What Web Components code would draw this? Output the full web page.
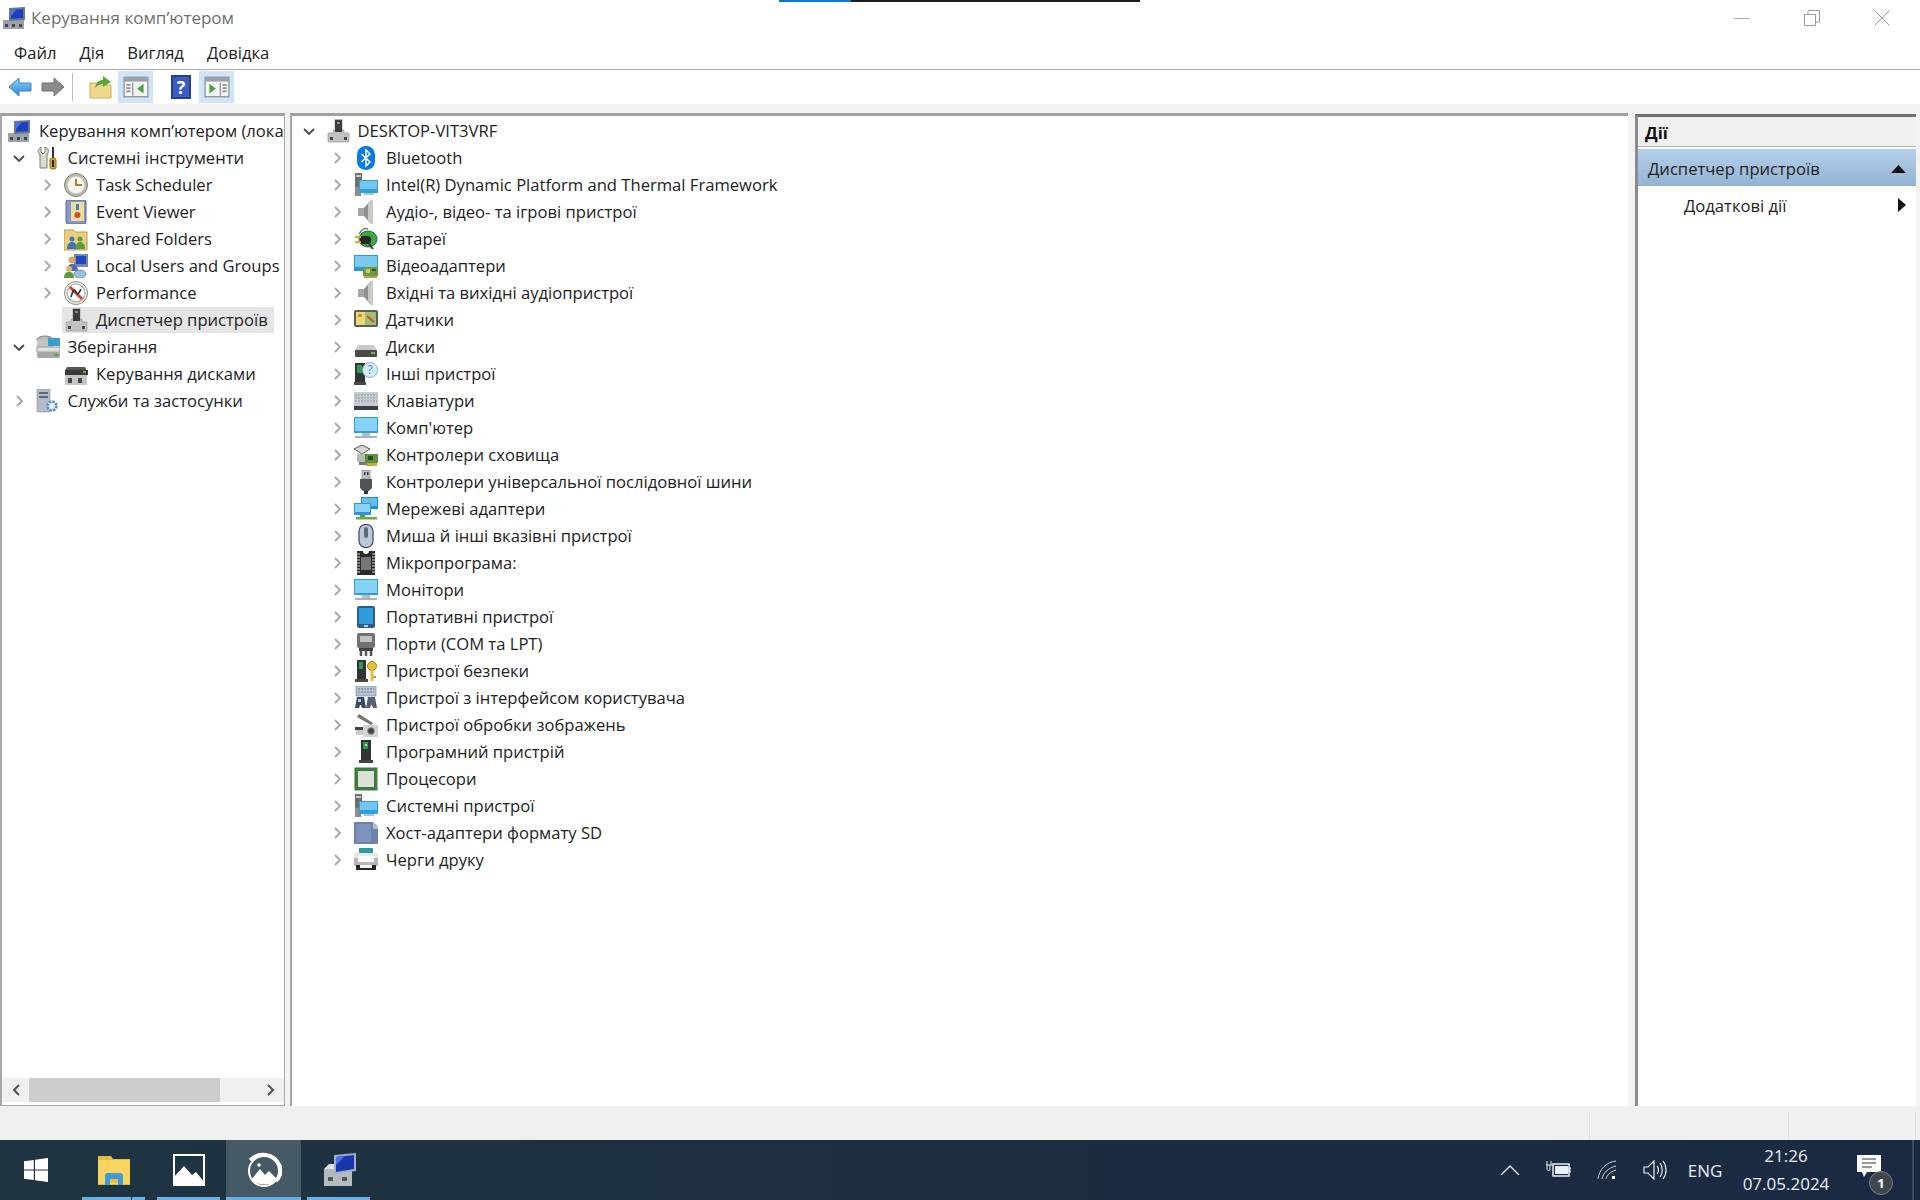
<!DOCTYPE html>
<html lang="uk">
<head>
<meta charset="utf-8">
<title>Керування комп’ютером</title>
<style>
  html, body { margin: 0; height: 100%; background: #fff; overflow: hidden; }
  body { font: 16.6px "Open Sans", "Noto Sans", sans-serif; color: #1a1a1a; }
</style>
</head>
<body>
<mmc-app>
  <mmc-titlebar slot="top">Керування комп’ютером</mmc-titlebar>
  <mmc-menubar slot="top"></mmc-menubar>
  <mmc-toolbar slot="top"></mmc-toolbar>

  <mmc-pane slot="left" style="width:285px">
    <tree-row level="0" icon="computer">Керування комп’ютером (локальний)</tree-row>
    <tree-row level="1" icon="tools" toggle="open">Системні інструменти</tree-row>
    <tree-row level="2" icon="clock" toggle="closed">Task Scheduler</tree-row>
    <tree-row level="2" icon="event" toggle="closed">Event Viewer</tree-row>
    <tree-row level="2" icon="shared" toggle="closed">Shared Folders</tree-row>
    <tree-row level="2" icon="users" toggle="closed">Local Users and Groups</tree-row>
    <tree-row level="2" icon="perf" toggle="closed">Performance</tree-row>
    <tree-row level="2" icon="devmgr" selected>Диспетчер пристроїв</tree-row>
    <tree-row level="1" icon="storage" toggle="open">Зберігання</tree-row>
    <tree-row level="2" icon="diskmgmt">Керування дисками</tree-row>
    <tree-row level="1" icon="services" toggle="closed">Служби та застосунки</tree-row>
    <h-scrollbar slot="bottom"></h-scrollbar>
  </mmc-pane>

  <mmc-pane slot="center" style="flex:1;border-right:none;border-bottom:none">
    <tree-row level="1" icon="devmgr" toggle="open">DESKTOP-VIT3VRF</tree-row>
    <tree-row level="2" icon="bluetooth" toggle="closed">Bluetooth</tree-row>
    <tree-row level="2" icon="sysdev" toggle="closed">Intel(R) Dynamic Platform and Thermal Framework</tree-row>
    <tree-row level="2" icon="speaker" toggle="closed">Аудіо-, відео- та ігрові пристрої</tree-row>
    <tree-row level="2" icon="battery" toggle="closed">Батареї</tree-row>
    <tree-row level="2" icon="display" toggle="closed">Відеоадаптери</tree-row>
    <tree-row level="2" icon="speaker" toggle="closed">Вхідні та вихідні аудіопристрої</tree-row>
    <tree-row level="2" icon="sensors" toggle="closed">Датчики</tree-row>
    <tree-row level="2" icon="disk" toggle="closed">Диски</tree-row>
    <tree-row level="2" icon="other" toggle="closed">Інші пристрої</tree-row>
    <tree-row level="2" icon="keyboard" toggle="closed">Клавіатури</tree-row>
    <tree-row level="2" icon="monitor" toggle="closed">Комп'ютер</tree-row>
    <tree-row level="2" icon="storagectl" toggle="closed">Контролери сховища</tree-row>
    <tree-row level="2" icon="usb" toggle="closed">Контролери універсальної послідовної шини</tree-row>
    <tree-row level="2" icon="network" toggle="closed">Мережеві адаптери</tree-row>
    <tree-row level="2" icon="mouse" toggle="closed">Миша й інші вказівні пристрої</tree-row>
    <tree-row level="2" icon="firmware" toggle="closed">Мікропрограма:</tree-row>
    <tree-row level="2" icon="monitor" toggle="closed">Монітори</tree-row>
    <tree-row level="2" icon="portable" toggle="closed">Портативні пристрої</tree-row>
    <tree-row level="2" icon="ports" toggle="closed">Порти (COM та LPT)</tree-row>
    <tree-row level="2" icon="security" toggle="closed">Пристрої безпеки</tree-row>
    <tree-row level="2" icon="hid" toggle="closed">Пристрої з інтерфейсом користувача</tree-row>
    <tree-row level="2" icon="imaging" toggle="closed">Пристрої обробки зображень</tree-row>
    <tree-row level="2" icon="software" toggle="closed">Програмний пристрій</tree-row>
    <tree-row level="2" icon="cpu" toggle="closed">Процесори</tree-row>
    <tree-row level="2" icon="sysdev" toggle="closed">Системні пристрої</tree-row>
    <tree-row level="2" icon="sd" toggle="closed">Хост-адаптери формату SD</tree-row>
    <tree-row level="2" icon="printer" toggle="closed">Черги друку</tree-row>
  </mmc-pane>

  <mmc-actions slot="right"></mmc-actions>
  <mmc-statusbar slot="bottom"></mmc-statusbar>
  <win-taskbar slot="bottom"></win-taskbar>
</mmc-app>

<script>
const ICONS = {
  computer: `<rect x="1" y="14" width="21" height="9" fill="#9aa1a8"/><rect x="3" y="18" width="3" height="3" fill="#444"/><rect x="10" y="18" width="3" height="3" fill="#444"/><rect x="17" y="18" width="3" height="3" fill="#444"/><path d="M7 2l16-1v13L7 15z" fill="#66788f"/><path d="M9 4l12-1v9L9 13z" fill="#1c3fc4"/><path d="M9 4l5 0-5 6z" fill="#4f74e8"/>`,
  tools: `<path d="M5 1v5l2 2 2-2V1c3 1 4 4 3 6l-1 2v13H4V9L3 7C1 5 3 2 5 1z" fill="#d9d9d2" stroke="#7c7c74"/><rect x="16" y="1" width="2" height="11" fill="#333"/><rect x="14" y="12" width="6" height="11" rx="2" fill="#e5a618" stroke="#8f6a10"/><rect x="16" y="14" width="2" height="7" fill="#222"/>`,
  clock: `<circle cx="12" cy="12" r="11.5" fill="#bcbcb0" stroke="#85857a"/><circle cx="12" cy="12" r="8.5" fill="#f6f6f0"/><path d="M12 6v6h6" fill="none" stroke="#a8842c" stroke-width="2"/>`,
  event: `<rect x="2" y="0" width="20" height="24" rx="2" fill="#8598cc" stroke="#5b6a9a"/><rect x="7" y="2" width="13" height="19" fill="#ecdf9a"/><rect x="12" y="4" width="3" height="6" fill="#3d7fc4"/><circle cx="13.500" cy="15" r="3" fill="#d84a2a"/>`,
  shared: `<path d="M0 3h9l2 2h12v18H0z" fill="#e9d080" stroke="#b59b4c"/><circle cx="8" cy="12" r="2.500" fill="#3f76b8"/><path d="M3 22c0-5 2-7 5-7s5 2 5 7z" fill="#3f76b8"/><circle cx="16" cy="12" r="2.500" fill="#5c9a3c"/><path d="M12 22c0-5 1-7 4-7s5 2 5 7z" fill="#5c9a3c"/>`,
  users: `<rect x="10" y="0" width="14" height="13" fill="#7486a8"/><rect x="12" y="2" width="10" height="8" fill="#2347c2"/><circle cx="8" cy="6" r="3.500" fill="#d9a85c"/><path d="M3 17c0-5 2-7 5-7s6 2 6 7z" fill="#496db4"/><circle cx="5" cy="15" r="3" fill="#e0b46c"/><path d="M0 24c0-5 2-6 5-6s5 1 5 6z" fill="#5b9c3a"/><ellipse cx="16" cy="20" rx="6" ry="4" fill="#9ec0dc" stroke="#6c8eac"/>`,
  perf: `<circle cx="12" cy="12" r="11.500" fill="#f5f5f0" stroke="#8a8a80"/><circle cx="12" cy="12" r="9" fill="#fff" stroke="#b8b8ac" stroke-width="1.500"/><path d="M6 6l12 12" stroke="#cf4a32" stroke-width="3"/><path d="M7 16c2-7 3-9 5-5s3 1 5-3" fill="none" stroke="#333" stroke-width="1.600"/>`,
  devmgr: `<path d="M2 23v-9h5v-3h2V0h7v11h2v3h5v9z" fill="#c2c2c2" stroke="#8e8e8e" stroke-width=".6"/><rect x="9" y="1" width="7" height="12" fill="#3c3c3c"/><rect x="11" y="3" width="3" height="2" fill="#8b8b8b"/><rect x="4" y="18" width="3" height="3" fill="#444"/><rect x="18" y="18" width="3" height="3" fill="#444"/>`,
  storage: `<ellipse cx="9" cy="5" rx="8" ry="4" fill="#b9bdb8" stroke="#7b7f7a"/><rect x="1" y="5" width="16" height="7" fill="#c3c7c2"/><rect x="12" y="3" width="12" height="8" fill="#3a9fd0"/><rect x="1" y="12" width="23" height="5" fill="#dfe2dd" stroke="#9aa09a"/><rect x="1" y="17" width="23" height="6" rx="2" fill="#a3a8a2"/><rect x="18" y="19" width="4" height="2" fill="#5aa53a"/>`,
  diskmgmt: `<path d="M3 5h18l2 4H1z" fill="#555"/><rect x="1" y="8" width="23" height="5" fill="#3a3a3a"/><rect x="19" y="9" width="3" height="2" fill="#66b844"/><rect x="1" y="13" width="22" height="10" fill="#c4c4c4"/><rect x="4" y="16" width="4" height="5" fill="#4a4a4a"/><rect x="14" y="16" width="4" height="5" fill="#4a4a4a"/>`,
  services: `<rect x="1" y="0" width="13" height="23" fill="#b3bcc6" stroke="#8590a0" stroke-width=".6"/><rect x="3" y="3" width="9" height="2" fill="#5b6878"/><rect x="3" y="7" width="9" height="2" fill="#5b6878"/><circle cx="16" cy="17" r="4.500" fill="#dbe8f4" stroke="#5a8ec4" stroke-width="2.500" stroke-dasharray="2.500 1"/><circle cx="16" cy="17" r="1.500" fill="#fff"/>`,
  bluetooth: `<rect x="3" y="0" width="18" height="24" rx="8.500" fill="#0a7be2"/><path d="M7.500 8l8.500 8-4 4V4l4 4-8.500 8" fill="none" stroke="#fff" stroke-width="1.500"/>`,
  sysdev: `<rect x="1" y="0" width="7" height="14" fill="#6e6e66"/><rect x="2" y="2" width="5" height="2" fill="#c9c9c0"/><rect x="1" y="14" width="6" height="9" fill="#8e8e86"/><rect x="5" y="7" width="19" height="13" fill="#2fa0dc"/><rect x="6" y="8" width="17" height="8" fill="#73c6ee"/><rect x="10" y="20" width="10" height="2" fill="#a6c6d8"/>`,
  speaker: `<rect x="4" y="8" width="6" height="8" fill="#a6a6a2"/><path d="M10 8l7-8h2v24h-2l-7-8z" fill="#8f8f8b"/><path d="M14 4l3-4h2v24h-2l-3-4z" fill="#c9c9c5"/>`,
  battery: `<path d="M5 7c3-6 7-6 9-5" fill="none" stroke="#7a7a72" stroke-width="1.500"/><ellipse cx="14" cy="12" rx="9" ry="8" fill="#39a748" stroke="#1f7430"/><rect x="6" y="9" width="11" height="8" rx="3" fill="#262626"/><rect x="1" y="9" width="6" height="2" fill="#d8a92a"/><rect x="1" y="14" width="6" height="2" fill="#d8a92a"/><path d="M15 17l4 5" stroke="#333" stroke-width="2"/>`,
  display: `<rect x="0" y="1" width="24" height="16" fill="#2f96d0"/><rect x="1" y="2" width="22" height="11" fill="#7ccbef"/><rect x="9" y="13" width="15" height="9" fill="#6f9a42"/><rect x="12" y="15" width="4" height="4" fill="#d6c866"/><rect x="18" y="15" width="4" height="2" fill="#2e5a24"/><rect x="10" y="22" width="13" height="2" fill="#b8a04a"/>`,
  sensors: `<rect x="0" y="2" width="24" height="17" rx="2" fill="#5b5e54"/><rect x="2" y="4" width="9" height="13" fill="#e8d97a"/><rect x="11" y="4" width="11" height="13" fill="#9fbf74"/><rect x="4" y="6" width="4" height="3" fill="#d98a3a"/><path d="M13 8l7 6" stroke="#d8463a" stroke-width="2"/>`,
  disk: `<path d="M4 10h16l3 5v7H1v-7z" fill="#c9c9c9"/><rect x="1" y="15" width="22" height="7" rx="1" fill="#4a4c4a"/><rect x="17" y="17" width="4" height="2" fill="#67bd4a"/>`,
  other: `<rect x="1" y="1" width="10" height="19" fill="#333"/><rect x="3" y="3" width="5" height="8" fill="#2d9a56"/><rect x="0" y="20" width="12" height="3" fill="#4a4a4a"/><circle cx="16" cy="8" r="7.500" fill="#d6ebfa" stroke="#7db4dc"/><text x="16" y="12" font-size="12" font-family="Open Sans" text-anchor="middle" fill="#3f80c4">?</text>`,
  keyboard: `<rect x="0" y="3" width="24" height="14" fill="#c5ccd4"/><path d="M1 6h22M1 9h22M1 12h22" stroke="#8f98a2" stroke-dasharray="2 1"/><rect x="0" y="17" width="24" height="4" fill="#3c3f42"/>`,
  monitor: `<rect x="0" y="1" width="24" height="16" fill="#2f9ddc"/><rect x="1" y="2" width="22" height="13" fill="#86d2f4"/><rect x="8" y="17" width="8" height="3" fill="#b6bec4"/><rect x="1" y="20" width="22" height="2" fill="#a9b3b9"/>`,
  storagectl: `<path d="M8 2l8 4-8 5-8-5z" fill="#d8d8d2" stroke="#5a5a54"/><rect x="3" y="11" width="13" height="8" fill="#b9bab2"/><rect x="11" y="11" width="13" height="9" fill="#5d9040"/><rect x="14" y="13" width="5" height="4" fill="#2a4a24"/><rect x="12" y="20" width="11" height="3" fill="#c9a83e"/><rect x="5" y="19" width="8" height="3" fill="#777"/>`,
  usb: `<rect x="8" y="0" width="8" height="9" fill="#bcc0c2" stroke="#777" stroke-width=".6"/><rect x="10" y="2" width="1.500" height="3" fill="#333"/><rect x="13" y="2" width="1.500" height="3" fill="#333"/><path d="M6 9h12v9l-3 3h-6l-3-3z" fill="#4f5356"/><rect x="10" y="21" width="4" height="3" fill="#2f3234"/>`,
  network: `<rect x="7" y="0" width="17" height="12" fill="#1f8ed4"/><rect x="8" y="1" width="15" height="8" fill="#69bdea"/><rect x="0" y="6" width="17" height="12" fill="#2a96d6"/><rect x="1" y="7" width="15" height="8" fill="#8ed2f3"/><rect x="6" y="18" width="5" height="2" fill="#5aa33a"/><rect x="2" y="20" width="21" height="2.500" fill="#67ad40"/>`,
  mouse: `<rect x="5" y="0.500" width="14" height="23" rx="6.500" fill="#bcc8d8" stroke="#39475a" stroke-width="1.200"/><rect x="10" y="3" width="4" height="11" rx="2" fill="#5a6a80"/>`,
  firmware: `<path d="M3 0h6a3 3 0 0 0 6 0h6v24H3z" fill="#2a2a2a"/><path d="M7 6h10v13H7z" fill="#777"/><path d="M3 3h3M3 6h3M3 9h3M3 12h3M3 15h3M3 18h3M3 21h3M18 3h3M18 6h3M18 9h3M18 12h3M18 15h3M18 18h3M18 21h3" stroke="#ddd"/>`,
  portable: `<rect x="3" y="1" width="18" height="22" rx="2" fill="#2f5b86"/><rect x="5" y="3" width="14" height="16" fill="#2f9ce0"/><rect x="10" y="20" width="4" height="2" fill="#bcd"/>`,
  ports: `<rect x="3" y="1" width="18" height="15" rx="2" fill="#6f7274"/><rect x="6" y="4" width="12" height="6" fill="#c0c2c4"/><rect x="5" y="16" width="14" height="3" fill="#3f4143"/><path d="M7 19v5M12 19v5M17 19v5" stroke="#555" stroke-width="2.500"/>`,
  security: `<rect x="3" y="1" width="9" height="19" fill="#333"/><rect x="5" y="3" width="4" height="7" fill="#2d9a56"/><rect x="1" y="20" width="13" height="3" fill="#4a4a4a"/><circle cx="18" cy="7" r="4.500" fill="#e9bc3c" stroke="#a67f16"/><rect x="16.500" y="11" width="3" height="11" fill="#e9bc3c"/><rect x="19" y="17" width="3" height="2" fill="#c8971e"/>`,
  hid: `<rect x="2" y="0" width="20" height="10" fill="#b8c4d4" stroke="#6c7c90" stroke-width=".6"/><path d="M4 3h16M4 6h16" stroke="#6b7a90" stroke-dasharray="2 1"/><path d="M1 22l2-11h7l2 11H8l-1-3H6l-1 3z" fill="#384a60"/><path d="M12 22l2-11h7l2 11h-4l-1-3h-1l-1 3z" fill="#566070"/><rect x="4" y="13" width="3" height="3" fill="#b9c8dc"/>`,
  imaging: `<path d="M3 4l2-3 14 9-2 2z" fill="#777"/><rect x="1" y="14" width="9" height="3" fill="#444"/><rect x="9" y="12" width="15" height="12" fill="#d4d4d4"/><circle cx="17" cy="18" r="3.500" fill="#444" stroke="#999"/><rect x="2" y="17" width="7" height="5" fill="#c9c9c9"/>`,
  software: `<rect x="7" y="0" width="10" height="20" fill="#333"/><rect x="9" y="2" width="5" height="7" fill="#2f9a56"/><rect x="11" y="4" width="2" height="2" fill="#9fe6b2"/><rect x="5" y="20" width="14" height="3" fill="#444"/>`,
  cpu: `<rect x="0.500" y="0.500" width="23" height="23" fill="#3d7a3e"/><path d="M0 3h24M0 7h24M0 11h24M0 15h24M0 19h24" stroke="#6aa05e" stroke-dasharray="1 21"/><rect x="4" y="4" width="16" height="16" fill="#dfe1d8"/>`,
  sd: `<path d="M0 1h19l5 5v17H0z" fill="#6c82ae"/><path d="M2 3h15v18H2z" fill="#7e93bc"/><path d="M19 1l5 5v2h-5z" fill="#aebbd3"/>`,
  printer: `<rect x="5" y="0" width="14" height="6" fill="#2f9aa2"/><rect x="0" y="5" width="24" height="5" fill="#e6e6e6"/><rect x="0" y="10" width="24" height="8" fill="#b5b5b5"/><rect x="4" y="8" width="16" height="6" fill="#fff"/><rect x="2" y="17" width="20" height="5" fill="#262626"/><rect x="6" y="17" width="12" height="3" fill="#f4f4f4"/>`,
  back: `<defs><linearGradient id="a" x1="0" y1="0" x2="0" y2="1"><stop offset="0" stop-color="#8ed4f8"/><stop offset="1" stop-color="#2686d0"/></linearGradient></defs><path d="M1 12L11 3v5h12v8H11v5z" fill="url(#a)" stroke="#3a85c4"/>`,
  forward: `<path d="M23 12L13 3v5H1v8h12v5z" fill="#8c8c8c" stroke="#707070"/>`,
  openfolder: `<path d="M1 8h8l2 2h11v13H1z" fill="#efd88c" stroke="#c9ae5c"/><path d="M6 13c1-6 4-8 8-8V1l8 6-8 5V9c-3 0-5 1-8 4z" fill="#58a838"/>`,
  paneleft: `<rect x="1" y="3" width="22" height="18" fill="#f4f5f4" stroke="#7d8388"/><rect x="1" y="3" width="22" height="4" fill="#99a0a6"/><path d="M9 8v12" stroke="#7d8388"/><path d="M3 10h4M3 13h4M3 16h4" stroke="#8c9298" stroke-width="1.500"/><path d="M19 9v9l-6-4.500z" fill="#49a33b"/>`,
  paneright: `<rect x="1" y="3" width="22" height="18" fill="#f4f5f4" stroke="#7d8388"/><rect x="1" y="3" width="22" height="4" fill="#99a0a6"/><path d="M15 8v12" stroke="#7d8388"/><path d="M17 10h4M17 13h4M17 16h4" stroke="#8c9298" stroke-width="1.500"/><path d="M5 9v9l6-4.500z" fill="#49a33b"/>`,
  help: `<rect x="2" y="0" width="20" height="24" fill="#1e3f9e"/><rect x="4" y="2" width="16" height="20" fill="#3c5cc4"/><text x="12" y="19" font-size="18" font-weight="700" font-family="Open Sans" text-anchor="middle" fill="#fff">?</text>`,
  start: `<path d="M0 3.300l9.800-1.400v9.500H0zM11 1.700L24 0v11.400H11zM0 12.600h9.800v9.500L0 20.700zM11 12.600h13V24l-13-1.800z" fill="#fff"/>`,
  explorer: `<path d="M0 2h13l2 3h17v26H0z" fill="#e2b84c"/><rect x="0" y="6" width="32" height="24" fill="#f9d45f"/><path d="M7 22a3 3 0 0 1 3-3h12a3 3 0 0 1 3 3v9h-5v-6h-8v6H7z" fill="#3c9bd8"/><rect x="12" y="25" width="8" height="4" fill="#f0bd3c"/>`,
  photos: `<rect x="1" y="1" width="30" height="31" fill="#1f3441" stroke="#fff" stroke-width="2"/><path d="M0 32V24l11-12 8 9 4-3 9 11v3z" fill="#fff"/>`,
  gallery: `<path d="M4 8c8-8 24-8 30 6 2 6 0 12-4 15" fill="none" stroke="#fff" stroke-width="3.500"/><circle cx="18" cy="19" r="15" fill="none" stroke="#fff" stroke-width="2"/><path d="M5 28l9-11 5 6 4-4 9 9c-8 6-20 6-27 0z" fill="#fff"/><circle cx="13" cy="13" r="1.800" fill="#fff"/>`,
  mmc: `<rect x="2" y="16" width="28" height="17" fill="#b3bac0"/><path d="M2 16l5-5h16l7 5z" fill="#dfe4e8"/><path d="M12 2l22-2v18l-22 3z" fill="#9fb0c4"/><path d="M14 4l18-2v14l-18 3z" fill="#1a35b0"/><path d="M14 4l9-1-9 9z" fill="#4f70e0"/><rect x="6" y="24" width="5" height="4" fill="#555"/><rect x="20" y="24" width="5" height="4" fill="#555"/>`
};

class AppIcon extends HTMLElement {
  connectedCallback() {
    const box = this.getAttribute('box') || '24';
    const size = this.getAttribute('size') || box;
    this.attachShadow({ mode: 'open' }).innerHTML = `
      <style>
        :host { display: inline-flex; width: ${size}px; height: ${size}px; flex: none; }
        svg { display: block; width: 100%; height: 100%; }
      </style>
      <svg viewBox="0 0 ${box} ${box}">${ICONS[this.getAttribute('name')] || ''}</svg>`;
  }
}

class MmcApp extends HTMLElement {
  connectedCallback() {
    this.attachShadow({ mode: 'open' }).innerHTML = `
      <style>
        :host { display: flex; flex-direction: column; height: 1200px; background: #f3f3f3; }
        .work { flex: 1; min-height: 0; display: flex; gap: 5px; padding: 9px 4px 0 0; }
      </style>
      <slot name="top"></slot>
      <div class="work">
        <slot name="left"></slot>
        <slot name="center"></slot>
        <slot name="right"></slot>
      </div>
      <slot name="bottom"></slot>`;
  }
}

class MmcTitlebar extends HTMLElement {
  connectedCallback() {
    this.attachShadow({ mode: 'open' }).innerHTML = `
      <style>
        :host { display: flex; align-items: center; height: 35px; padding-right: 3px; background: #fff; color: #6f6f6f; font-size: 17px; position: relative; }
        app-icon { margin: 0 5px 0 2px; }
        .text { flex: 1; }
        .btn { width: 70px; height: 35px; display: flex; align-items: center; justify-content: center; }
        svg { display: block; }
        .progress { position: absolute; left: 779px; top: 0; width: 361px; height: 2px; background: linear-gradient(90deg, #0a78d4 0 72px, #1c1c1c 72px); }
      </style>
      <app-icon name="computer"></app-icon>
      <span class="text"><slot></slot></span>
      <span class="btn"><svg width="16" height="16"><path d="M0 8.500h16" stroke="#a8a8a8"/></svg></span>
      <span class="btn"><svg width="16" height="16"><path d="M.5 4.500h11v11H.5zM4 4V.5h11.500V12H12" fill="none" stroke="#9a9a9a"/></svg></span>
      <span class="btn"><svg width="16" height="16"><path d="M.5.500l15 15M15.500.500l-15 15" stroke="#9a9a9a"/></svg></span>
      <div class="progress"></div>`;
  }
}

class MmcMenubar extends HTMLElement {
  connectedCallback() {
    this.attachShadow({ mode: 'open' }).innerHTML = `
      <style>
        :host { display: flex; gap: 23px; align-items: center; height: 33px; padding: 1px 0 0 14px; box-sizing: content-box; background: #fff; border-bottom: 2px solid #a9a9a9; color: #222; margin-bottom: -1px; }
      </style>
      <span>Файл</span><span>Дія</span><span>Вигляд</span><span>Довідка</span>`;
  }
}

class MmcToolbar extends HTMLElement {
  connectedCallback() {
    this.attachShadow({ mode: 'open' }).innerHTML = `
      <style>
        :host { display: flex; align-items: center; height: 32px; padding: 1px 0 1px 7px; background: #fff; }
        .b { display: flex; align-items: center; justify-content: center; height: 32px; }
        .on { background: #cfe5f7; }
        .sep { width: 1px; height: 28px; background: #bdbdbd; margin: 0 16px 0 7px; }
      </style>
      <span class="b" style="width:26px;margin-right:8px"><app-icon name="back"></app-icon></span>
      <span class="b" style="width:24px"><app-icon name="forward"></app-icon></span>
      <span class="sep"></span>
      <span class="b" style="width:24px;margin-right:5px"><app-icon name="openfolder"></app-icon></span>
      <span class="b on" style="width:35px;margin-right:16px"><app-icon name="paneleft" size="26"></app-icon></span>
      <span class="b" style="width:24px;margin-right:6px"><app-icon name="help"></app-icon></span>
      <span class="b on" style="width:35px"><app-icon name="paneright" size="26"></app-icon></span>`;
  }
}

class MmcPane extends HTMLElement {
  connectedCallback() {
    this.attachShadow({ mode: 'open' }).innerHTML = `
      <style>
        :host { display: flex; flex-direction: column; box-sizing: border-box; background: #fff; border: 1px solid #a8a8a8; border-left-width: 2px; border-top: 3px solid #a0a0a0; min-width: 0; }
        .rows { flex: 1; min-height: 0; overflow: hidden; padding-top: 1px; }
      </style>
      <div class="rows"><slot></slot></div>
      <slot name="bottom"></slot>`;
  }
}

class TreeRow extends HTMLElement {
  connectedCallback() {
    const level = +this.getAttribute('level');
    const toggle = this.getAttribute('toggle');
    const paths = { open: 'M3 6l5 5 5-5', closed: 'M6 3l5 5-5 5' };
    const color = toggle === 'open' ? '#4a4a4a' : '#a6a6a6';
    const chev = toggle ? `<svg width="16" height="16" viewBox="0 0 16 16"><path d="${paths[toggle]}" fill="none" stroke="${color}" stroke-width="1.800"/></svg>` : '';
    this.attachShadow({ mode: 'open' }).innerHTML = `
      <style>
        :host { display: flex; align-items: center; height: 27px; white-space: nowrap; padding-left: ${3 + level * 28.5}px; color: #222; }
        .chev { display: flex; justify-content: center; width: 18px; margin: 0 6px 0 -24px; flex: none; }
        .cell { display: flex; align-items: center; gap: 8px; height: 26px; padding: 0 6px 0 2px; }
        :host([selected]) .cell { background: #e5e5e5; }
      </style>
      <span class="chev">${chev}</span>
      <span class="cell"><app-icon name="${this.getAttribute('icon')}"></app-icon><span><slot></slot></span></span>`;
  }
}

class HScrollbar extends HTMLElement {
  connectedCallback() {
    this.attachShadow({ mode: 'open' }).innerHTML = `
      <style>
        :host { display: flex; align-items: center; height: 24px; background: #f0f0f0; margin-bottom: 3px; }
        .arrow { width: 27px; display: flex; justify-content: center; flex: none; }
        .thumb { width: 191px; height: 24px; background: #cdcdcd; }
        .rest { flex: 1; }
      </style>
      <span class="arrow"><svg width="10" height="12"><path d="M8 1L3 6l5 5" fill="none" stroke="#505050" stroke-width="2"/></svg></span>
      <span class="thumb"></span>
      <span class="rest"></span>
      <span class="arrow"><svg width="10" height="12"><path d="M2 1l5 5-5 5" fill="none" stroke="#505050" stroke-width="2"/></svg></span>`;
  }
}

class MmcActions extends HTMLElement {
  connectedCallback() {
    this.attachShadow({ mode: 'open' }).innerHTML = `
      <style>
        :host { display: flex; flex-direction: column; width: 281px; margin: 1px 0 0 2px; flex: none; box-sizing: border-box; background: #fff; border-top: 3px solid #6f6f6f; border-left: 3px solid #8c8c8c; color: #222; }
        .title { height: 29px; line-height: 32px; padding-left: 7px; background: #f0f0f0; font-weight: 700; border-bottom: 1px solid #b4b4b4; color: #111; }
        .head { display: flex; align-items: center; justify-content: space-between; box-sizing: border-box; height: 37px; margin-top: 2px; padding: 2px 10px 0; background: linear-gradient(#b6d0e9, #92b3d3); }
        .item { display: flex; align-items: center; justify-content: space-between; box-sizing: border-box; height: 37px; padding: 1px 10px 0 46px; }
      </style>
      <div class="title">Дії</div>
      <div class="head"><span>Диспетчер пристроїв</span><svg width="15" height="8"><path d="M0 8l7.500-8L15 8z" fill="#111"/></svg></div>
      <div class="item"><span>Додаткові дії</span><svg width="8" height="14"><path d="M0 0l8 7-8 7z" fill="#111"/></svg></div>`;
  }
}

class MmcStatusbar extends HTMLElement {
  connectedCallback() {
    this.attachShadow({ mode: 'open' }).innerHTML = `
      <style>
        :host { display: grid; grid-template-columns: 1590px 199px 127px 1fr; height: 34px; background: #f0f0f0; }
        span { border-right: 1px solid #e2e2e2; margin-top: 6px; }
      </style>
      <span></span><span></span><span></span>`;
  }
}

class TaskItem extends HTMLElement {
  connectedCallback() {
    this.attachShadow({ mode: 'open' }).innerHTML = `
      <style>
        :host { position: relative; display: flex; align-items: center; justify-content: center; width: 75px; height: 60px; flex: none; }
        :host([active]) { background: #465a65; }
        .bar { position: absolute; left: 6px; right: 6px; bottom: 0; height: 3px; background: #6bb0e4; }
        :host([active]) .bar { left: 0; right: 0; }
        .cut { position: absolute; left: 49px; width: 1px; top: 0; bottom: 0; background: #1f3441; }
      </style>
      <slot></slot><div class="bar">${this.hasAttribute('split') ? '<div class="cut"></div>' : ''}</div>`;
  }
}

class WinTaskbar extends HTMLElement {
  connectedCallback() {
    this.attachShadow({ mode: 'open' }).innerHTML = `
      <style>
        :host { display: flex; height: 60px; background: linear-gradient(90deg, #1f3542, #1c2c40 60%, #1a2a42); color: #eaf0f6; font-size: 17px; position: relative; }
        .start { width: 72px; margin-right: 4px; display: flex; align-items: center; justify-content: center; flex: none; }
        .tray { margin-left: auto; display: grid; grid-template-columns: 47px 49px 49px 47px 54px 108px 60px; align-items: center; justify-items: center; margin-right: 20px; height: 60px; }
        .clock { display: flex; flex-direction: column; align-items: center; line-height: 28px; }
        .notify { position: relative; width: 26px; height: 30px; }
        .badge { position: absolute; left: 12px; top: 16px; width: 22px; height: 22px; border-radius: 50%; background: #3f474e; border: 1px solid #77808a; color: #fff; font-size: 13px; font-weight: 700; display: flex; align-items: center; justify-content: center; }
        .edge { position: absolute; right: 6px; top: 0; bottom: 0; width: 2px; background: #3b4a60; }
        svg { display: block; }
      </style>
      <span class="start"><app-icon name="start" size="24"></app-icon></span>
      <task-item split><app-icon name="explorer" box="32" size="32"></app-icon></task-item>
      <task-item><app-icon name="photos" box="32" size="32"></app-icon></task-item>
      <task-item active><app-icon name="gallery" box="36" size="36"></app-icon></task-item>
      <task-item><app-icon name="mmc" box="34" size="34"></app-icon></task-item>
      <div class="tray">
        <svg width="20" height="10"><path d="M1 10l9-9 9 9" fill="none" stroke="#eaf0f6" stroke-width="1.300"/></svg>
        <svg width="26" height="18"><path d="M8 3h16v12H8z" fill="none" stroke="#eaf0f6" stroke-width="1.500"/><path d="M10 5h13v8H10z" fill="#eaf0f6"/><path d="M24 7h2v4h-2zM1 4h6M2 0v4M6 0v4M2 4v4c0 2 3 2 3 0V4" fill="none" stroke="#eaf0f6"/></svg>
        <svg width="20" height="20"><path d="M1 19C2 10 9 2 19 1M5 19c1-6 6-11 14-13M9 19c1-4 4-7 10-9" fill="none" stroke="#c8d0da" stroke-width="1"/><rect x="15" y="16" width="3" height="3" fill="#fff"/></svg>
        <svg width="24" height="20"><path d="M1 7h4l6-6v18l-6-6H1zM14 6c2 2 2 6 0 8M17 3c3 4 3 10 0 14M20 1c4 5 4 13 0 18" fill="none" stroke="#eaf0f6" stroke-width="1.200"/></svg>
        <span>ENG</span>
        <span class="clock"><span>21:26</span><span>07.05.2024</span></span>
        <span class="notify">
          <svg width="26" height="24"><path d="M0 0h24v17H10l-3 5-2-5H0z" fill="#fff"/><path d="M5 4h14M5 8h14M5 12h10" stroke="#333"/></svg>
          <span class="badge">1</span>
        </span>
      </div>
      <div class="edge"></div>`;
  }
}

customElements.define('app-icon', AppIcon);
customElements.define('mmc-app', MmcApp);
customElements.define('mmc-titlebar', MmcTitlebar);
customElements.define('mmc-menubar', MmcMenubar);
customElements.define('mmc-toolbar', MmcToolbar);
customElements.define('mmc-pane', MmcPane);
customElements.define('tree-row', TreeRow);
customElements.define('h-scrollbar', HScrollbar);
customElements.define('mmc-actions', MmcActions);
customElements.define('mmc-statusbar', MmcStatusbar);
customElements.define('task-item', TaskItem);
customElements.define('win-taskbar', WinTaskbar);
</script>
</body>
</html>
